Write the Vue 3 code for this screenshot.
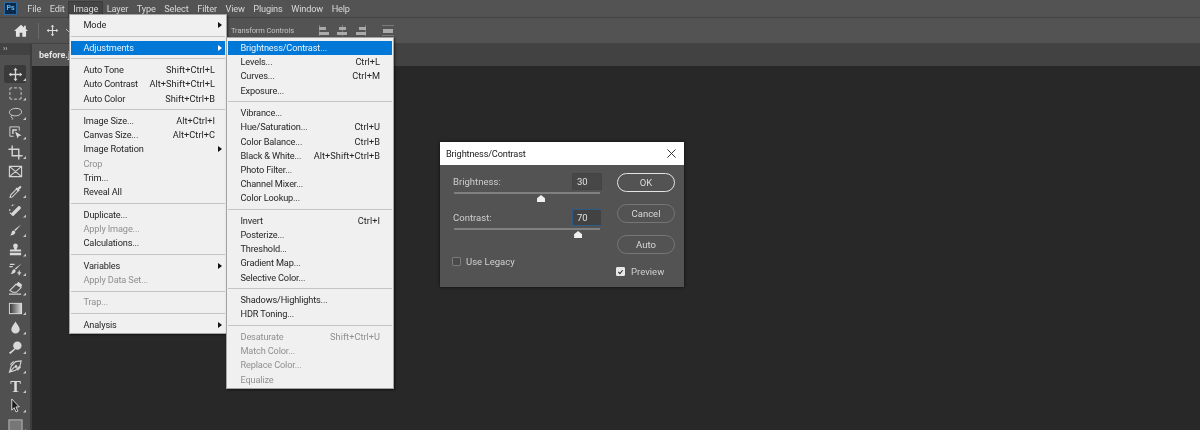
<script setup>
const menuBar = ['File', 'Edit', 'Image', 'Layer', 'Type', 'Select', 'Filter', 'View', 'Plugins', 'Window', 'Help']

const imageMenu = [
  [{ t: 'Mode', arrow: true }],
  [{ t: 'Adjustments', arrow: true, active: true }],
  [{ t: 'Auto Tone', s: 'Shift+Ctrl+L' }, { t: 'Auto Contrast', s: 'Alt+Shift+Ctrl+L' }, { t: 'Auto Color', s: 'Shift+Ctrl+B' }],
  [{ t: 'Image Size...', s: 'Alt+Ctrl+I' }, { t: 'Canvas Size...', s: 'Alt+Ctrl+C' }, { t: 'Image Rotation', arrow: true }, { t: 'Crop', off: true }, { t: 'Trim...' }, { t: 'Reveal All' }],
  [{ t: 'Duplicate...' }, { t: 'Apply Image...', off: true }, { t: 'Calculations...' }],
  [{ t: 'Variables', arrow: true }, { t: 'Apply Data Set...', off: true }],
  [{ t: 'Trap...', off: true }],
  [{ t: 'Analysis', arrow: true }]
]

const adjustMenu = [
  [{ t: 'Brightness/Contrast...', active: true }, { t: 'Levels...', s: 'Ctrl+L' }, { t: 'Curves...', s: 'Ctrl+M' }, { t: 'Exposure...' }],
  [{ t: 'Vibrance...' }, { t: 'Hue/Saturation...', s: 'Ctrl+U' }, { t: 'Color Balance...', s: 'Ctrl+B' }, { t: 'Black & White...', s: 'Alt+Shift+Ctrl+B' }, { t: 'Photo Filter...' }, { t: 'Channel Mixer...' }, { t: 'Color Lookup...' }],
  [{ t: 'Invert', s: 'Ctrl+I' }, { t: 'Posterize...' }, { t: 'Threshold...' }, { t: 'Gradient Map...' }, { t: 'Selective Color...' }],
  [{ t: 'Shadows/Highlights...' }, { t: 'HDR Toning...' }],
  [{ t: 'Desaturate', s: 'Shift+Ctrl+U', off: true }, { t: 'Match Color...', off: true }, { t: 'Replace Color...', off: true }, { t: 'Equalize', off: true }]
]

const moveD = 'M8 .8l2.2 2.6H8.7v3.9h3.9V5.8L15.2 8l-2.6 2.2V8.7H8.7v3.9h1.5L8 15.2l-2.2-2.6h1.5V8.7H3.4v1.5L.8 8l2.6-2.2v1.5h3.9V3.4H5.8z'

const tools = [
  { name: 'move', selected: true, corner: true, paths: [{ d: moveD, f: 1 }] },
  { name: 'marquee', corner: true, paths: [{ d: 'M2 4.5V3a1 1 0 0 1 1-1h1.5M6.5 2h3M11.500 2H13a1 1 0 0 1 1 1v1.500M14 6.500v3M14 11.500V13a1 1 0 0 1-1 1h-1.500M9.500 14h-3M4.500 14H3a1 1 0 0 1-1-1v-1.500M2 9.500v-3' }] },
  { name: 'lasso', corner: true, paths: [{ d: 'M8.500 2.500c3.500 0 6 1.400 6 3.700s-3 4.300-6.500 4.300c-3.700 0-6.500-1.500-6.500-3.800S4.800 2.500 8.500 2.500zM4 10c-1 1-.8 2.200.3 2.500.9.200 1 1 .2 2' }] },
  { name: 'object', corner: true, paths: [{ d: 'M2 2h10v4M6 12H2V2', }, { d: 'M4.500 4.500h5v1.500h-3.500v3.500h-1.500z', f: 1 }, { d: 'M7.500 7l7 4.200-3 .6-1.200 2.700z', f: 1 }] },
  { name: 'crop', corner: true, paths: [{ d: 'M4.500 .5v11h11M.5 4.500h11v11', w: 1.500 }] },
  { name: 'frame', paths: [{ d: 'M1.500 2.500h13v11h-13zM1.500 2.500l13 11M14.500 2.500l-13 11', w: 1.200 }] },
  { name: 'eyedropper', corner: true, paths: [{ d: 'M9 5.500l-6 6-.8 2.800 2.300-.4 6.200-6.400z', w: 1.100 }, { d: 'M8 4.500l3.500 3.500 1-1-.8-.8 2.300-2.300c.8-.9-.6-2.400-1.600-1.600L10 4.600l-.8-.9z', f: 1 }] },
  { name: 'heal', corner: true, paths: [{ d: 'M2 6.500c-.6 2 .2 4 1 5M4 3c1-1 2.500-1.300 3.500-1.200', w: 1.200, dash: true }, { d: 'M6 13.500l7.500-7.500c1.200-1.200-1.300-3.700-2.500-2.500L3.500 11c-1.200 1.200 1.300 3.700 2.500 2.500z', f: 1 }] },
  { name: 'brush', corner: true, paths: [{ d: 'M14 1.500L8 8.500l-1.300-1.200zM6.200 8c1 .2 1.700 1 1.600 2-.2 2-3 3.300-5.800 3.300 1.300-.8 1.500-1.800 1.800-3.200.3-1.200 1.200-2.200 2.400-2.100z', f: 1 }] },
  { name: 'stamp', corner: true, paths: [{ d: 'M8 1.500c1.600 0 2.500 1.200 2.500 2.400 0 1.600-1.200 2.400-1.200 4H13c.8 0 1 .6 1 1.100v1H2V9c0-.5.2-1.100 1-1.100h3.700c0-1.600-1.200-2.400-1.200-4C5.500 2.700 6.400 1.500 8 1.500zM2 11.500h12V14H2z', f: 1 }] },
  { name: 'history', corner: true, paths: [{ d: 'M14.500 1.500L8.500 8 7.300 6.900zM6.800 7.800c1 .2 1.500 1.100 1.300 2-.4 1.900-3 3.200-5.600 3 1.300-.7 1.600-1.700 2-3 .3-1.200 1.200-2.100 2.300-2z', f: 1 }, { d: 'M2 2.500h5M1.500 5h3.500M12 9v5M10 11.500h4', w: 1.300 }] },
  { name: 'eraser', corner: true, paths: [{ d: 'M2 10l6.500-6.500 5.500 3.500-5 5H5z', w: 1.100 }, { d: 'M8.500 3.500L10.500 1.500c.4-.4.800-.4 1.200-.1l3 2.200c.5.400.5.900.1 1.300L14 7z', f: 1 }, { d: 'M1 14h13', w: 1.300 }] },
  { name: 'gradient', corner: true, grad: true, paths: [] },
  { name: 'burn', corner: true, paths: [{ d: 'M8 1.500c1.500 3 4.500 5.500 4.500 8.500A4.500 4.500 0 0 1 3.500 10C3.500 7 6.500 4.500 8 1.500z', f: 1 }] },
  { name: 'dodge', corner: true, paths: [{ d: 'M10 1.500a4.500 4.500 0 1 1 0 9 4.500 4.500 0 0 1 0-9zM6.800 9l1 1-5.300 5-1.500-1.500z', f: 1 }] },
  { name: 'pen', corner: true, paths: [{ d: 'M14 2L8 2.800 3.500 7.500 1.500 14l6.500-2 4.800-4.500zM1.500 14L7 8.500M6 2.500L2.500 6M13.500 8.500l-3.500 3.500', w: 1.200 }, { d: 'M8.500 6.500a1.500 1.500 0 1 1-.01 0z', f: 1 }] },
  { name: 'type', corner: true, glyph: 'T', paths: [] },
  { name: 'path', corner: true, paths: [{ d: 'M4 1l8 8.500H8.500l2 4.500-2 .8-2-4.500L4 13z', f: 2 }] },
  { name: 'rect', corner: true, rect: true, paths: [] }
]

const sliders = [
  { label: 'Brightness:', value: 30, pos: 59.6, focus: false },
  { label: 'Contrast:', value: 70, pos: 85, focus: true }
]
</script>

<template>
  <div class="ps">
    <header class="menubar">
      <div class="logo">Ps</div>
      <nav class="menubar-items">
        <span v-for="m in menuBar" :key="m" class="mb-item" :class="{ open: m === 'Image' }">{{ m }}</span>
      </nav>
    </header>

    <div class="options">
      <svg class="home" viewBox="0 0 16 14" width="14" height="13"><path d="M8 .5L0 7.500h2.200V14h4.300V9.500h3V14h4.300V7.500H16L13.500 5.300V1.500h-2v2z" /></svg>
      <i class="opt-sep"></i>
      <svg class="opt-move" viewBox="0 0 16 16" width="13" height="13"><path :d="moveD" /></svg>
      <svg class="opt-chev" viewBox="0 0 8 5" width="8" height="5"><path d="M1 1l3 3 3-3" /></svg>
      <span class="transform">Transform Controls</span>
      <div class="aligns">
        <i class="al al-l"></i>
        <i class="al al-c"></i>
        <i class="al al-r"></i>
        <i class="al al-h"></i>
      </div>
    </div>

    <div class="workspace">
      <aside class="toolbar">
        <div class="tb-head">››</div>
        <div class="tb-grip"></div>
        <div class="tools">
          <div v-for="tool in tools" :key="tool.name" class="tool" :class="{ selected: tool.selected }">
            <svg viewBox="0 0 16 16" width="15" height="15">
              <defs v-if="tool.grad">
                <linearGradient id="toolGrad" x1="0" x2="1" y1="0" y2="0">
                  <stop offset="0" stop-color="#333" />
                  <stop offset="1" stop-color="#ddd" />
                </linearGradient>
              </defs>
              <rect v-if="tool.grad" x="1.500" y="2.500" width="13" height="11" fill="url(#toolGrad)" stroke="#ddd" />
              <rect v-if="tool.rect" x="1" y="2" width="14" height="12" fill="#777" stroke="#bbb" />
              <text v-if="tool.glyph" x="8" y="14" class="tool-glyph">{{ tool.glyph }}</text>
              <path
                v-for="(p, i) in tool.paths"
                :key="i"
                :d="p.d"
                :class="p.f === 1 ? 'ic-fill' : p.f === 2 ? 'ic-dark' : 'ic-line'"
                :stroke-width="p.w || 1"
                :stroke-dasharray="p.dash ? '2 1.500' : null"
              />
            </svg>
            <i v-if="tool.corner" class="corner"></i>
          </div>
        </div>
      </aside>
      <main class="main">
        <div class="tabs"><div class="tab">before.jpg</div></div>
        <div class="canvas"></div>
      </main>
    </div>

    <section class="menu menu-image">
      <template v-for="(group, g) in imageMenu" :key="g">
        <div v-if="g" class="sep"></div>
        <div v-for="item in group" :key="item.t" class="row" :class="{ off: item.off, active: item.active }">
          <span>{{ item.t }}</span>
          <span v-if="item.s" class="keys">{{ item.s }}</span>
          <i v-if="item.arrow" class="arrow"></i>
        </div>
      </template>
    </section>

    <section class="menu menu-adjust">
      <template v-for="(group, g) in adjustMenu" :key="g">
        <div v-if="g" class="sep"></div>
        <div v-for="item in group" :key="item.t" class="row" :class="{ off: item.off, active: item.active }">
          <span>{{ item.t }}</span>
          <span v-if="item.s" class="keys">{{ item.s }}</span>
        </div>
      </template>
    </section>

    <section class="dialog">
      <div class="dlg-title">
        <span>Brightness/Contrast</span>
        <svg viewBox="0 0 10 10" width="9" height="9"><path d="M.5.5l9 9M9.500.5l-9 9" /></svg>
      </div>
      <div class="dlg-body">
        <div class="dlg-left">
          <div v-for="s in sliders" :key="s.label" class="field">
            <div class="field-top">
              <label>{{ s.label }}</label>
              <div class="num" :class="{ focus: s.focus }">{{ s.value }}</div>
            </div>
            <div class="track"><i class="thumb" :style="{ left: s.pos + '%' }"></i></div>
          </div>
          <div class="legacy"><i class="check"></i><span>Use Legacy</span></div>
        </div>
        <div class="dlg-right">
          <button class="btn primary">OK</button>
          <button class="btn">Cancel</button>
          <button class="btn">Auto</button>
          <div class="preview">
            <i class="check on">
              <svg viewBox="0 0 10 10" width="8" height="8"><path d="M2 5l2.200 2.300L8 2.500" /></svg>
            </i>
            <span>Preview</span>
          </div>
        </div>
      </div>
    </section>
  </div>
</template>

<style scoped>
.ps {
  position: relative;
  width: 1200px;
  height: 430px;
  overflow: hidden;
  display: flex;
  flex-direction: column;
  background: #282828;
  font-family: Roboto, "Noto Sans", sans-serif;
  font-size: 9.2px;
  letter-spacing: -0.15px;
  color: #d8d8d8;
  filter: blur(0.3px);
}

.menubar {
  height: 17px;
  flex: none;
  display: flex;
  align-items: center;
  background: #535353;
  border-bottom: 1px solid #434343;
}
.logo {
  width: 11px;
  height: 11px;
  margin-left: 4px;
  background: #0c2a4a;
  border: 1px solid #2a6aa8;
  color: #5cb4f4;
  font-size: 7px;
  font-weight: 700;
  line-height: 10px;
  text-align: center;
}
.menubar-items {
  display: flex;
  margin-left: 6px;
}
.mb-item {
  padding: 0 4.300px;
  line-height: 14px;
  font-size: 9.2px;
  white-space: nowrap;
}
.mb-item.open {
  background: #444;
  outline: 1px solid #3c3c3c;
}

.options {
  height: 25px;
  flex: none;
  display: flex;
  align-items: center;
  background: #535353;
  border-bottom: 1px solid #434343;
}
.home {
  margin-left: 14px;
  fill: #e4e4e4;
}
.opt-sep {
  width: 1px;
  height: 16px;
  margin-left: 10px;
  background: #6a6a6a;
}
.opt-move {
  margin-left: 7px;
  fill: #dcdcdc;
}
.opt-chev {
  margin-left: 6px;
  fill: none;
  stroke: #bbb;
}
.transform {
  margin-left: 158px;
  font-size: 7.500px;
  letter-spacing: -0.1px;
  color: #c4c4c4;
  white-space: nowrap;
}
.aligns {
  display: flex;
  align-items: center;
  margin-left: 25px;
}
.al {
  width: 10px;
  height: 11px;
  margin-right: 8.500px;
  background:
    linear-gradient(#aaa, #aaa) 0 2px / 7px 3px no-repeat,
    linear-gradient(#aaa, #aaa) 0 7px / 10px 3px no-repeat,
    linear-gradient(#7c7c7c, #7c7c7c) 0 0 / 1px 11px no-repeat;
}
.al-c {
  background:
    linear-gradient(#aaa, #aaa) 1.500px 2px / 7px 3px no-repeat,
    linear-gradient(#aaa, #aaa) 0 7px / 10px 3px no-repeat,
    linear-gradient(#7c7c7c, #7c7c7c) 4.500px 0 / 1px 11px no-repeat;
}
.al-r {
  background:
    linear-gradient(#aaa, #aaa) 3px 2px / 7px 3px no-repeat,
    linear-gradient(#aaa, #aaa) 0 7px / 10px 3px no-repeat,
    linear-gradient(#7c7c7c, #7c7c7c) 9px 0 / 1px 11px no-repeat;
}
.al-h {
  width: 12px;
  margin-left: 8px;
  margin-right: 0;
  background:
    linear-gradient(#7c7c7c, #7c7c7c) 0 0 / 12px 1px no-repeat,
    linear-gradient(#aaa, #aaa) 1px 3.500px / 10px 4px no-repeat,
    linear-gradient(#7c7c7c, #7c7c7c) 0 10px / 12px 1px no-repeat;
}

.workspace {
  flex: 1;
  min-height: 0;
  display: flex;
}
.toolbar {
  width: 30px;
  flex: none;
  background: #505050;
  border-right: 2px solid #3c3c3c;
}
.tb-head {
  height: 11px;
  padding-left: 3px;
  background: #424242;
  font-size: 8px;
  line-height: 10px;
  color: #cfcfcf;
}
.tb-grip {
  height: 10px;
}
.tools {
  display: flex;
  flex-direction: column;
  gap: 1.500px;
  padding: 0 4px;
}
.tool {
  position: relative;
  height: 18px;
  display: flex;
  align-items: center;
  justify-content: center;
}
.tool.selected {
  background: #3a3a3a;
  border-radius: 2px;
}
.ic-fill {
  fill: #d8d8d8;
  stroke: none;
}
.ic-line {
  fill: none;
  stroke: #d4d4d4;
}
.ic-dark {
  fill: #1c1c1c;
  stroke: #e0e0e0;
  stroke-width: 1;
}
.tool-glyph {
  font-family: "Liberation Serif", serif;
  font-weight: 700;
  font-size: 17px;
  fill: #dcdcdc;
  text-anchor: middle;
}
.corner {
  position: absolute;
  right: 0;
  bottom: 2px;
  width: 3px;
  height: 3px;
  background: #c8c8c8;
  clip-path: polygon(100% 0, 100% 100%, 0 100%);
}

.main {
  flex: 1;
  min-width: 0;
  display: flex;
  flex-direction: column;
}
.tabs {
  height: 22px;
  flex: none;
  background: #424242;
}
.tab {
  width: 100px;
  height: 22px;
  padding-left: 7px;
  box-sizing: border-box;
  background: #535353;
  font-weight: 700;
  font-size: 9px;
  letter-spacing: 0;
  line-height: 22px;
  color: #e4e4e4;
}
.canvas {
  flex: 1;
  background: #282828;
}

.menu {
  position: absolute;
  box-sizing: border-box;
  padding: 3px 1px 1px;
  background: #f0f0f0;
  border: 1px solid #a4a4a4;
  box-shadow: 1px 1px 2px rgba(0, 0, 0, 0.55);
  color: #262626;
}
.menu-image {
  left: 69px;
  top: 14px;
  width: 158px;
  height: 320px;
}
.menu-adjust {
  left: 226px;
  top: 37px;
  width: 168px;
  height: 352px;
}
.row {
  position: relative;
  height: 14.200px;
  display: flex;
  align-items: center;
  justify-content: space-between;
  padding: 0 12px 0 12.500px;
  line-height: 14.200px;
  white-space: nowrap;
}
.keys {
  letter-spacing: 0.02px;
}
.menu-image .row {
  padding-right: 10px;
}
.row.off {
  color: #909090;
}
.row.active {
  background: #0078d7;
  color: #e6f2fc;
}
.arrow {
  position: absolute;
  right: 3px;
  top: 4px;
  border-left: 4px solid #111;
  border-top: 3px solid transparent;
  border-bottom: 3px solid transparent;
}
.row.active .arrow {
  border-left-color: #fff;
}
.sep {
  height: 8.400px;
  display: flex;
  align-items: center;
}
.sep::before {
  content: "";
  display: block;
  width: 100%;
  height: 1px;
  background: #c4c4c4;
}

.dialog {
  position: absolute;
  left: 440px;
  top: 142px;
  width: 244px;
  height: 145px;
  display: flex;
  flex-direction: column;
  background: #535353;
  box-shadow: 0 0 3px rgba(0, 0, 0, 0.7);
}
.dlg-title {
  height: 23px;
  flex: none;
  display: flex;
  align-items: center;
  justify-content: space-between;
  padding: 0 8px 0 6px;
  background: #fff;
  color: #222;
}
.dlg-title svg {
  fill: none;
  stroke: #222;
}
.dlg-body {
  flex: 1;
  position: relative;
  display: flex;
  justify-content: space-between;
  padding: 8px 9px 0 12px;
  box-sizing: border-box;
  font-size: 9.500px;
  letter-spacing: 0.02px;
}
.dlg-left {
  width: 150px;
  display: flex;
  flex-direction: column;
}
.field {
  height: 36px;
}
.field-top {
  display: flex;
  align-items: center;
  justify-content: space-between;
  height: 17px;
  padding: 0 1px;
}
.field-top label {
  color: #cfcfcf;
}
.num {
  box-sizing: border-box;
  width: 30px;
  height: 17px;
  margin-right: -1px;
  padding-left: 4px;
  background: #474747;
  border: 1px solid #444;
  line-height: 15px;
  color: #e0e0e0;
}
.num.focus {
  border-color: #2f5a86;
  background: #424242;
}
.track {
  position: relative;
  height: 2px;
  margin: 2px 0 0 2px;
  width: 146px;
  background: #808080;
}
.thumb {
  position: absolute;
  top: 3px;
  width: 8px;
  height: 7px;
  margin-left: -4px;
  background: #f0f0f0;
  clip-path: polygon(50% 0, 100% 45%, 100% 100%, 0 100%, 0 45%);
}
.legacy {
  display: flex;
  align-items: center;
  gap: 5px;
  margin: 11px 0 0 0;
  color: #cfcfcf;
}
.check {
  box-sizing: border-box;
  width: 9px;
  height: 9px;
  flex: none;
  display: flex;
  align-items: center;
  justify-content: center;
  background: #4a4a4a;
  border: 1px solid #7a7a7a;
  border-radius: 1px;
}
.check.on {
  background: #e8e8e8;
  border-color: #e8e8e8;
}
.check svg {
  fill: none;
  stroke: #333;
  stroke-width: 1.600;
}
.dlg-right {
  width: 58px;
  display: flex;
  flex-direction: column;
  gap: 12px;
}
.btn {
  box-sizing: border-box;
  width: 58px;
  height: 19px;
  padding: 0;
  background: transparent;
  border: 1px solid #767676;
  border-radius: 10px;
  color: #d8d8d8;
  font: inherit;
  line-height: 16px;
}
.btn.primary {
  border-color: #e4e4e4;
}
.preview {
  display: flex;
  align-items: center;
  gap: 6px;
  margin-top: 0;
  margin-left: -1px;
  color: #cfcfcf;
}
</style>

<style>
html, body {
  margin: 0;
  background: #282828;
}
</style>
